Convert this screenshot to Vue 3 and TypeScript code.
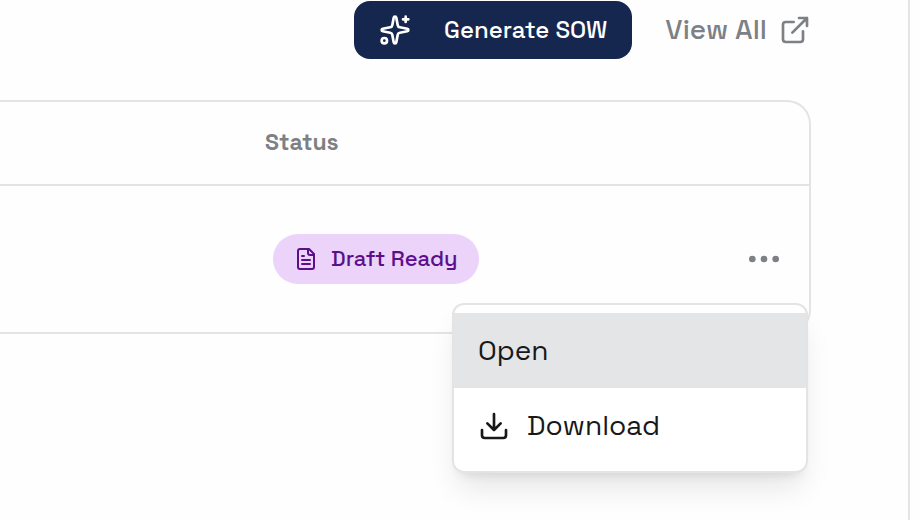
<script setup lang="ts">
import { ref } from 'vue'

interface SowRow {
  id: number
  status: string
}

const rows: SowRow[] = [{ id: 1, status: 'Draft Ready' }]
const openMenu = ref<number | null>(1)

function toggleMenu(id: number): void {
  openMenu.value = openMenu.value === id ? null : id
}
</script>

<template>
  <main class="panel">
    <header class="toolbar">
      <button class="generate" type="button">
        <svg class="icon" viewBox="0 0 24 24" aria-hidden="true">
          <path d="M11.017 2.814a1 1 0 0 1 1.966 0l1.051 5.558a2 2 0 0 0 1.594 1.594l5.558 1.051a1 1 0 0 1 0 1.966l-5.558 1.051a2 2 0 0 0-1.594 1.594l-1.051 5.558a1 1 0 0 1-1.966 0l-1.051-5.558a2 2 0 0 0-1.594-1.594l-5.558-1.051a1 1 0 0 1 0-1.966l5.558-1.051a2 2 0 0 0 1.594-1.594z" />
          <path d="M20 2v4M22 4h-4" />
          <circle cx="4" cy="20" r="2" />
        </svg>
        <span class="label">Generate SOW</span>
      </button>
      <a class="view-all" href="#">
        <span class="label">View All</span>
        <svg class="icon" viewBox="0 0 24 24" aria-hidden="true">
          <path d="M15 3h6v6M10 14 21 3M18 13v6a2 2 0 0 1-2 2H5a2 2 0 0 1-2-2V8a2 2 0 0 1 2-2h6" />
        </svg>
      </a>
    </header>

    <section class="card">
      <table>
        <thead>
          <tr>
            <th class="lead"></th>
            <th scope="col"><span class="label">Status</span></th>
            <th></th>
          </tr>
        </thead>
        <tbody>
          <tr v-for="row in rows" :key="row.id">
            <td></td>
            <td>
              <span class="badge">
                <svg class="icon small" viewBox="0 0 24 24" aria-hidden="true">
                  <path d="M15 2H6a2 2 0 0 0-2 2v16a2 2 0 0 0 2 2h12a2 2 0 0 0 2-2V7z" />
                  <path d="M14 2v4a2 2 0 0 0 2 2h4M10 9H8M16 13H8M16 17H8" />
                </svg>
                <span class="label">{{ row.status }}</span>
              </span>
            </td>
            <td class="actions">
              <div class="anchor">
                <button class="more" type="button" aria-label="More actions" :aria-expanded="openMenu === row.id" @click="toggleMenu(row.id)">
                  <svg class="icon large" viewBox="0 0 24 24" aria-hidden="true">
                    <circle cx="5" cy="12" r="1" />
                    <circle cx="12" cy="12" r="1" />
                    <circle cx="19" cy="12" r="1" />
                  </svg>
                </button>
                <div v-if="openMenu === row.id" class="menu" role="menu">
                  <button class="item active" type="button" role="menuitem">
                    <span class="label">Open</span>
                  </button>
                  <button class="item" type="button" role="menuitem">
                    <svg class="icon" viewBox="0 0 24 24" aria-hidden="true">
                      <path d="M12 15V3M21 15v4a2 2 0 0 1-2 2H5a2 2 0 0 1-2-2v-4M7 10l5 5 5-5" />
                    </svg>
                    <span class="label">Download</span>
                  </button>
                </div>
              </div>
            </td>
          </tr>
        </tbody>
      </table>
    </section>
  </main>
</template>

<style>
body {
  background: #fefefe;
}
</style>

<style scoped>
.panel {
  box-sizing: border-box;
  min-height: 100vh;
  margin-right: 10px;
  padding: 1px 97px 0 0;
  border-right: 2px solid #e4e4e5;
  font-family: "Space Grotesk", Inter, "Liberation Sans", sans-serif;
  color: #18181b;
}

button {
  font: inherit;
  color: inherit;
  border: 0;
  margin: 0;
  background: none;
  cursor: pointer;
}

.label {
  display: block;
  padding-bottom: 2px;
}

.icon {
  display: block;
  flex: none;
  width: 32px;
  height: 32px;
  fill: none;
  stroke: currentColor;
  stroke-width: 2;
  stroke-linecap: round;
  stroke-linejoin: round;
}

.icon.small {
  width: 24px;
  height: 24px;
}

.icon.large {
  width: 40px;
  height: 40px;
}

.toolbar {
  display: flex;
  justify-content: flex-end;
  align-items: center;
  gap: 33px;
}

.generate {
  display: flex;
  align-items: center;
  gap: 33px;
  height: 58px;
  padding: 0 25px;
  border-radius: 16px;
  background: #16274f;
  color: #fff;
  font-size: 24px;
  font-weight: 500;
}

.view-all {
  display: flex;
  align-items: center;
  gap: 12px;
  color: #7d8084;
  font-size: 28px;
  font-weight: 500;
  text-decoration: none;
}

.card {
  margin-top: 41px;
  border: 2px solid #e4e4e5;
  border-left: 0;
  border-radius: 0 24px 24px 0;
}

table {
  width: 100%;
  border-collapse: separate;
  border-spacing: 0;
}

th {
  height: 82px;
  padding: 0 24px;
  border-bottom: 2px solid #e4e4e5;
  color: #7d8084;
  font-size: 23px;
  font-weight: 700;
  text-align: left;
}

.lead {
  width: 193px;
}

td {
  height: 146px;
  padding: 0 25px 0 32px;
}

.badge {
  display: inline-flex;
  align-items: center;
  gap: 13px;
  height: 50px;
  padding: 0 21px;
  border-radius: 25px;
  background: #ebd3f9;
  color: #5b0f8b;
  font-size: 22px;
  font-weight: 500;
  vertical-align: middle;
}

.anchor {
  position: relative;
  display: flex;
  justify-content: flex-end;
}

.more {
  padding: 0;
  color: #7d8084;
}

.menu {
  position: absolute;
  z-index: 1;
  top: 64px;
  right: -24px;
  box-sizing: border-box;
  width: 356px;
  padding: 8px 0;
  border: 2px solid #e4e4e5;
  border-radius: 12px;
  background: #fff;
  box-shadow: 0 20px 30px -6px rgba(0, 0, 0, 0.1), 0 8px 12px -8px rgba(0, 0, 0, 0.12);
}

.item {
  display: flex;
  align-items: center;
  gap: 17px;
  width: 100%;
  height: 75px;
  padding: 0 24px;
  font-size: 28px;
  text-align: left;
}

.item.active {
  background: #e3e5e7;
}
</style>
